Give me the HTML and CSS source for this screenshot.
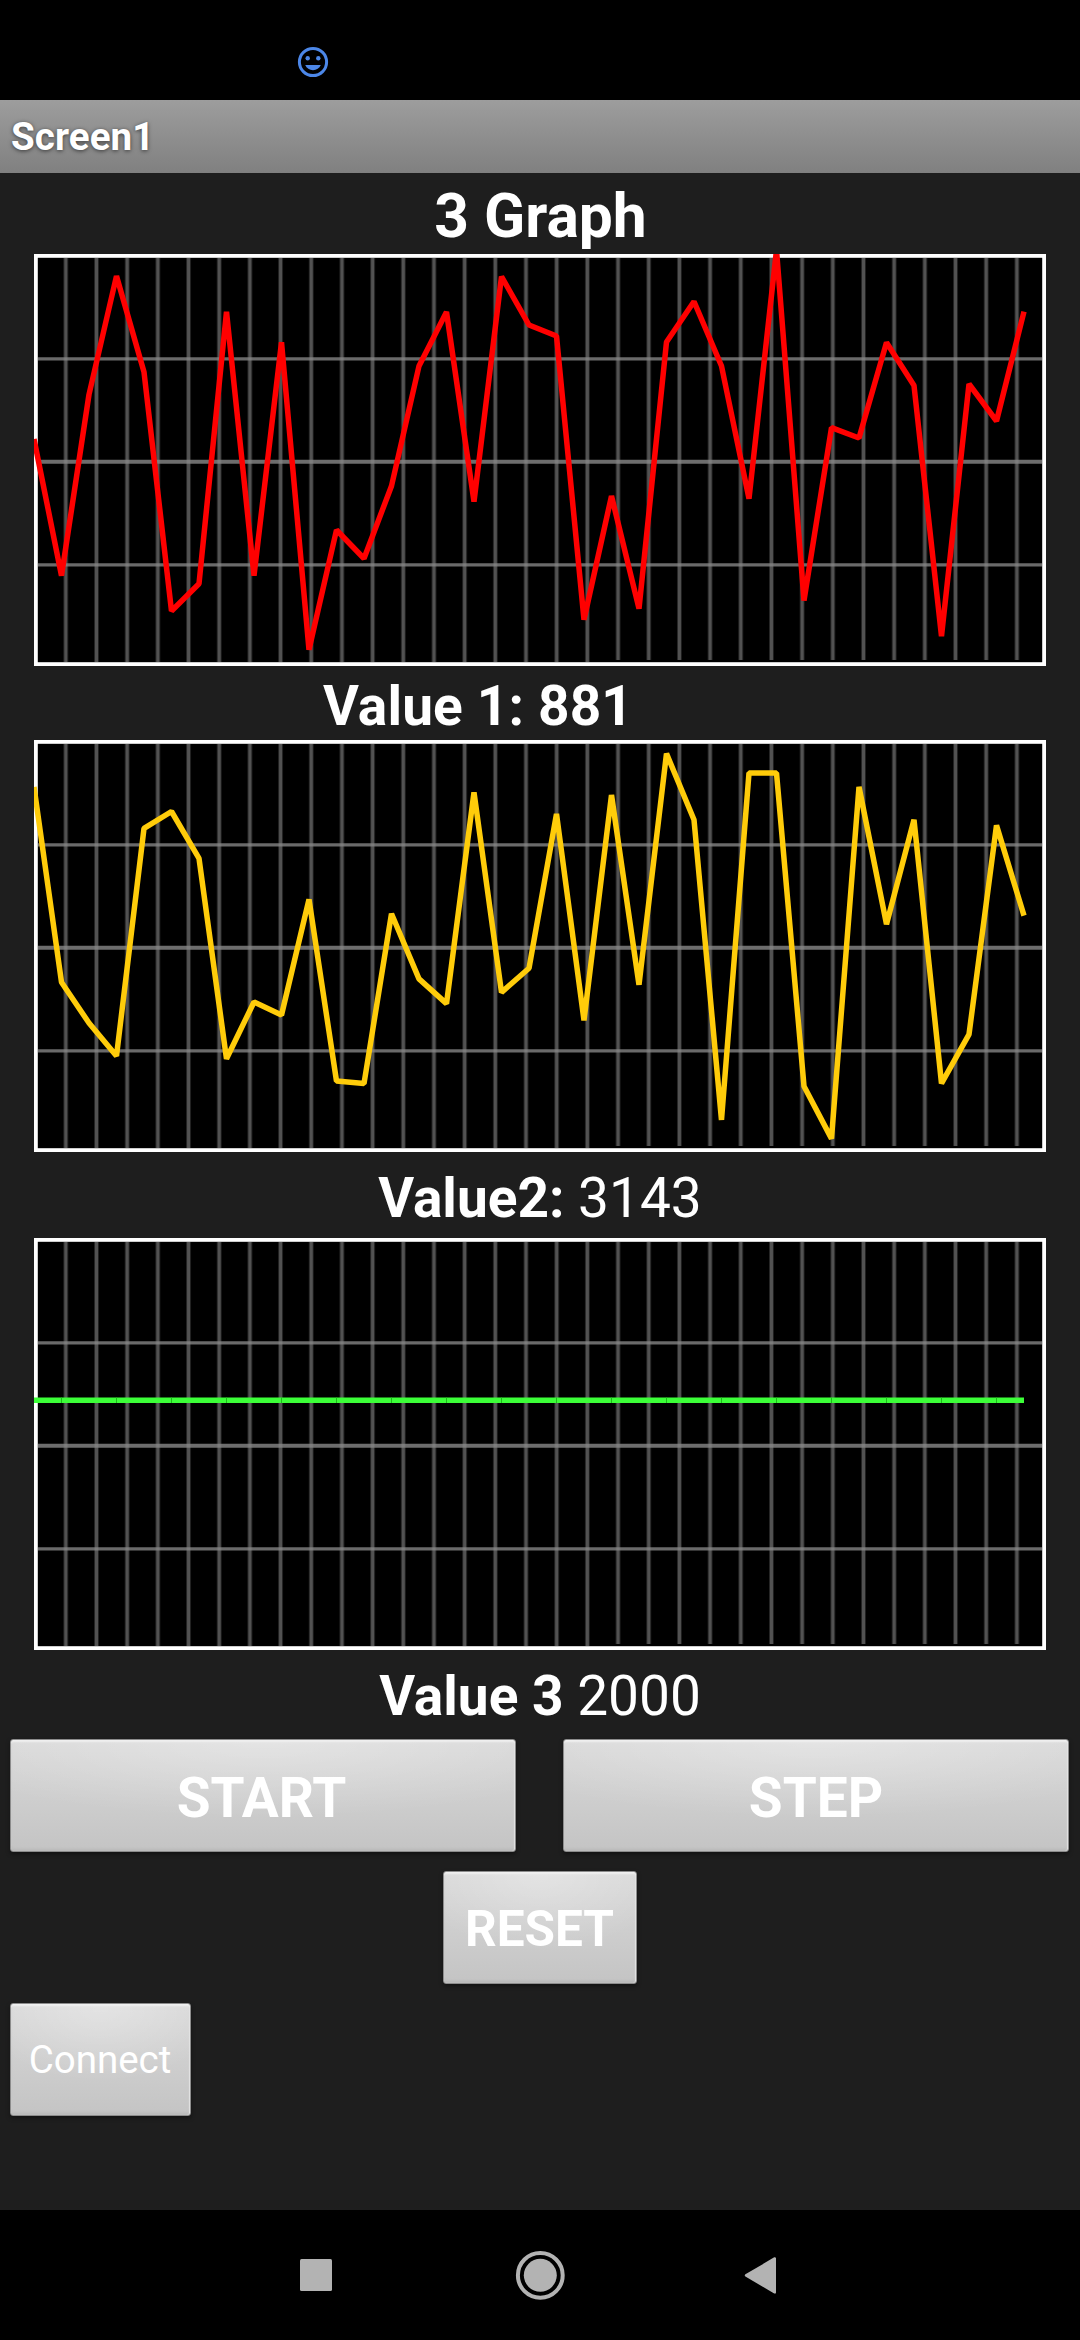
FILE: index.html
```html
<!DOCTYPE html>
<html lang="en">
<head>
<meta charset="utf-8">
<title>Screen1</title>
<link rel="stylesheet" href="styles.css">
</head>
<body>
<svg class="defs" width="0" height="0" aria-hidden="true">
  <defs>
    <pattern id="columns" x="16.5" y="0" width="30.68" height="412" patternUnits="userSpaceOnUse">
      <rect x="13.4" y="0" width="3.8" height="412" fill="#888" fill-opacity=".6"/>
    </pattern>
    <g id="grid">
      <rect width="1012" height="412" fill="#000"/>
      <rect x="4" y="4" width="990" height="404" fill="url(#columns)"/>
      <rect x="569" y="406" width="439" height="2" fill="#000"/>
      <path d="M4 104.9H1008M4 310.9H1008" stroke="#888" stroke-opacity=".78" stroke-width="3.2"/>
      <path d="M4 207.8H1008" stroke="#888" stroke-opacity=".8" stroke-width="4"/>
      <rect x="1.9" y="1.9" width="1008.2" height="408.2" fill="none" stroke="#fff" stroke-width="3.8"/>
    </g>
  </defs>
</svg>

<header class="status-bar">
  <svg class="smiley" viewBox="0 0 32 32">
    <circle cx="16" cy="16" r="13.6" fill="none" stroke="#4c87e8" stroke-width="3"/>
    <circle cx="10.7" cy="12.2" r="2.2" fill="#4c87e8"/>
    <circle cx="21.3" cy="12.2" r="2.2" fill="#4c87e8"/>
    <path d="M8.2 19H23.8C22.4 22.3 19.5 24.2 16 24.2S9.6 22.3 8.2 19Z" fill="#4c87e8"/>
  </svg>
</header>
<div class="title-bar">Screen1</div>

<main class="screen">
  <h1 class="heading">3 Graph</h1>

  <svg class="chart" viewBox="0 0 1012 412">
    <use href="#grid"/>
    <g transform="translate(-34 -254)">
      <polyline class="series red" points="34,439 61.5,575.7 89,394.5 116.5,276 144,372 171.5,611 199,583.7 226.5,311.7 254,575.7 281.5,342.3 309,649.7 336.5,530 364,558.5 391.5,486 419,366 446.5,312 474,501.7 501.5,276.5 529,325 556.5,336 584,619.7 611.5,496 639,608.7 666.5,342 694,301.5 721.5,366 749,498.7 776.5,250 804,600.5 831.5,427.7 859,438 886.5,342.5 914,385.5 941.5,636.3 969,384 996.5,421 1024,311.7"/>
    </g>
  </svg>

  <div class="label label-one"><b>Value 1: 881</b></div>

  <svg class="chart" viewBox="0 0 1012 412">
    <use href="#grid"/>
    <g transform="translate(-34 -740)">
      <polyline class="series yellow" points="34,786.9 61.5,982.2 89,1023 116.5,1056 144,828.3 171.5,811.5 199,858.3 226.5,1058.8 254,1002 281.5,1015 309,899.4 336.5,1081 364,1083.6 391.5,913.8 419,978.9 446.5,1003.6 474,792.4 501.5,992.4 529,968.2 556.5,813.9 584,1020.3 611.5,795 639,984.8 666.5,753.6 694,819.8 721.5,1119.9 749,773 776.5,773 804,1086.2 831.5,1138.6 859,786.9 886.5,924.2 914,819.8 941.5,1083.4 969,1034.4 996.5,825.4 1024,915.6"/>
    </g>
  </svg>

  <div class="label label-two"><b>Value2:</b> 3143</div>

  <svg class="chart" viewBox="0 0 1012 412">
    <use href="#grid"/>
    <path class="series green" d="M0 162.3H990"/>
    <path class="series seam" d="M27 162.3H990"/>
  </svg>

  <div class="label label-three"><b>Value 3</b> 2000</div>

  <div class="row row-split">
    <button class="btn btn-wide btn-start">START</button>
    <button class="btn btn-wide">STEP</button>
  </div>
  <div class="row row-center">
    <button class="btn btn-reset">RESET</button>
  </div>
  <div class="row">
    <button class="btn btn-connect">Connect</button>
  </div>
</main>

<nav class="nav-bar">
  <svg class="nav-icons" viewBox="0 0 1080 130">
    <rect x="300" y="49" width="32" height="32" rx="1.5" fill="#b3b3b3"/>
    <circle cx="540.3" cy="65.3" r="22.4" fill="none" stroke="#b3b3b3" stroke-width="4"/>
    <circle cx="540.3" cy="65.3" r="16.5" fill="#b3b3b3"/>
    <path d="M746 65.4L774.8 48.4V82.4Z" fill="#b3b3b3" stroke="#b3b3b3" stroke-width="2.4" stroke-linejoin="round"/>
  </svg>
</nav>
</body>
</html>
```
FILE: styles.css
```css
* {
  box-sizing: border-box;
}

body {
  margin: 0;
  width: 1080px;
  height: 2340px;
  display: flex;
  flex-direction: column;
  overflow: hidden;
  background: #1e1e1e;
  color: #fff;
  font-family: Roboto, "Liberation Sans", sans-serif;
}

.defs {
  display: block;
  height: 0;
}

.status-bar {
  flex: 0 0 100px;
  background: #000;
  padding: 46px 0 0 297px;
}

.smiley {
  display: block;
  width: 32px;
  height: 32px;
}

.title-bar {
  flex: 0 0 73px;
  padding-left: 11px;
  background: linear-gradient(#9d9d9d, #808080);
  font-size: 38.5px;
  font-weight: 700;
  line-height: 73px;
  letter-spacing: 0.1px;
  text-shadow: 0 1px 4px rgba(0, 0, 0, 0.6);
}

.screen {
  flex: 0 0 2037px;
  display: flex;
  flex-direction: column;
}

.heading {
  margin: 0;
  height: 81px;
  padding: 8px 0 0 1px;
  font-size: 60.5px;
  font-weight: 700;
  line-height: 71px;
  text-align: center;
}

.chart {
  flex: none;
  display: block;
  width: 1012px;
  height: 412px;
  margin-left: 34px;
}

.series {
  fill: none;
  stroke-width: 5.5;
  stroke-linejoin: bevel;
}

.red {
  stroke: #f00;
}

.yellow {
  stroke: #ffcc0a;
}

.green {
  stroke: #3cff38;
}

.seam {
  stroke: #1fb81c;
  stroke-dasharray: 1 54;
}

.label {
  flex: none;
  font-size: 55px;
  line-height: 64px;
  white-space: pre;
}

.label-one {
  height: 74px;
  padding: 8px 0 0 323px;
  letter-spacing: 0.15px;
}

.label-two {
  height: 86px;
  padding-top: 14px;
  text-align: center;
}

.label-three {
  height: 89px;
  padding-top: 14px;
  text-align: center;
}

.row {
  flex: 0 0 132px;
  display: flex;
  align-items: flex-start;
  padding: 0 11px 0 10px;
}

.row-split {
  justify-content: space-between;
}

.row-center {
  justify-content: center;
}

.btn {
  height: 113px;
  padding: 2px 0 0;
  border: 1px solid #8c8c8c;
  border-radius: 3px;
  background:
    radial-gradient(ellipse 70% 70% at 50% 0, rgba(255, 255, 255, 0.3), rgba(255, 255, 255, 0)),
    linear-gradient(#d9d9d9, #c4c4c4);
  box-shadow: inset 0 3px 2px -1px #f0f0f0, inset -1px 0 1px #e4e4e4, inset 0 -3px 3px -1px #b8b8b8, 0 2px 4px rgba(0, 0, 0, 0.4);
  color: #fff;
  font-family: inherit;
  font-weight: 700;
}

.btn-wide {
  width: 506px;
  padding-top: 4px;
  font-size: 55px;
}

.btn-start {
  padding-right: 3px;
}

.btn-reset {
  width: 194px;
  font-size: 49.5px;
}

.btn-connect {
  width: 181px;
  padding: 0 1px 0 0;
  font-size: 38.5px;
  font-weight: 400;
}

.nav-bar {
  flex: 0 0 130px;
  background: #000;
}

.nav-icons {
  display: block;
  width: 1080px;
  height: 130px;
}
```
